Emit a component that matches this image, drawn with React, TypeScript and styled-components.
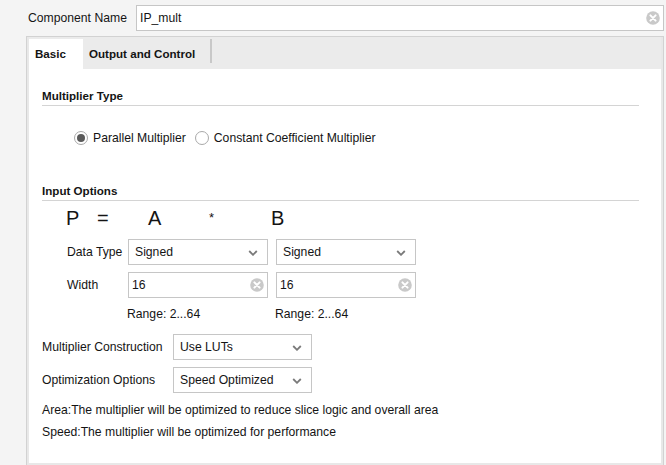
import React from "react";
import styled, { createGlobalStyle } from "styled-components";

const GlobalStyle = createGlobalStyle`
  html, body { margin: 0; padding: 0; background: #f4f4f4; }
  body { font-family: "Liberation Sans", Arial, sans-serif; font-size: 12.2px; color: #141414; }
  * { box-sizing: border-box; }
`;

const Page = styled.div`
  width: 666px;
  height: 465px;
  padding: 5px 2px 0 26px;
  display: flex;
  flex-direction: column;
  overflow: hidden;
`;

const NameRow = styled.div`
  display: flex;
  align-items: center;
  height: 26px;
`;

const NameLabel = styled.span`
  margin-left: 2px;
  width: 108px;
`;

const Field = styled.div<{ $w?: number }>`
  position: relative;
  display: flex;
  align-items: center;
  height: 26px;
  width: ${(p) => (p.$w ? `${p.$w}px` : "auto")};
  flex: ${(p) => (p.$w ? "none" : "1")};
  background: #fff;
  border: 1px solid #c6c6c6;
  padding: 0 0 0 3px;
`;

const FieldText = styled.span`
  flex: 1;
  white-space: nowrap;
`;

const ClearWrap = styled.span`
  display: flex;
  width: 14px;
  height: 14px;
  margin-right: 3px;
`;

const ClearIcon = () => (
  <ClearWrap>
    <svg width="14" height="14" viewBox="0 0 14 14">
      <circle cx="7" cy="7" r="6.8" fill="#c9c9c9" />
      <path d="M4.4 4.4 L9.6 9.6 M9.6 4.4 L4.4 9.6" stroke="#fff" strokeWidth="2" strokeLinecap="round" />
    </svg>
  </ClearWrap>
);

const Panel = styled.div`
  margin-top: 5px;
  width: 638px;
  flex: 1;
  border: 1px solid #d2d2d2;
  border-bottom: none;
  background: #e8e8e8;
  padding: 0 2px 2px;
  display: flex;
  flex-direction: column;
`;

const TabBar = styled.div`
  display: flex;
  height: 32px;
  padding-top: 2px;
  background: #ebebeb;
`;

const Tab = styled.div<{ $active?: boolean }>`
  display: flex;
  align-items: center;
  padding: 0 0 2px 6px;
  width: ${(p) => (p.$active ? "54px" : "127px")};
  background: ${(p) => (p.$active ? "#fff" : "transparent")};
  font-weight: bold;
  font-size: 11.6px;
`;

const TabSep = styled.div`
  width: 2px;
  height: 24px;
  background: #c8c8c8;
  align-self: flex-start;
`;

const Content = styled.div`
  flex: 1;
  background: #fff;
  padding: 20px 22px 0 13px;
  display: flex;
  flex-direction: column;
`;

const SectionTitle = styled.div<{ $mt?: number }>`
  font-weight: bold;
  font-size: 11.6px;
  line-height: 14px;
  padding-bottom: 2px;
  border-bottom: 1px solid #d4d4d4;
  margin-top: ${(p) => p.$mt ?? 0}px;
`;

const RadioRow = styled.div`
  display: flex;
  align-items: center;
  margin: 24px 0 0 32px;
  height: 16px;
`;

const Radio = styled.span<{ $checked?: boolean }>`
  width: 14px;
  height: 14px;
  border-radius: 50%;
  border: 1px solid #a9a9a9;
  background: #fff;
  display: flex;
  align-items: center;
  justify-content: center;
  margin-right: 5px;
  &::after {
    content: "";
    display: ${(p) => (p.$checked ? "block" : "none")};
    width: 8px;
    height: 8px;
    border-radius: 50%;
    background: #5a5a5a;
  }
`;

const RadioLabel = styled.span`
  margin-right: 9px;
`;

const Equation = styled.div`
  display: flex;
  align-items: baseline;
  margin: 5px 0 0 24px;
  height: 24px;
  font-size: 20px;
  line-height: 24px;
`;

const EqCell = styled.span<{ $w: number; $small?: boolean }>`
  width: ${(p) => p.$w}px;
  font-size: ${(p) => (p.$small ? "13px" : "20px")};
  position: relative;
  top: ${(p) => (p.$small ? "-3px" : "0")};
`;

const FormRow = styled.div<{ $indent: number; $label: number; $mt: number }>`
  display: flex;
  align-items: center;
  gap: 8px;
  margin-top: ${(p) => p.$mt}px;
  padding-left: ${(p) => p.$indent}px;
  & > label {
    width: ${(p) => p.$label - 8}px;
    flex: none;
    white-space: nowrap;
  }
`;

const RangeRow = styled.div`
  display: flex;
  gap: 8px;
  margin-top: 9px;
  padding-left: 85px;
  line-height: 14px;
  & > span { width: 140px; }
`;

const ChevronSvg = styled.svg`
  margin-right: 9px;
  margin-top: 2px;
`;

const Chevron = () => (
  <ChevronSvg width="10" height="6" viewBox="0 0 10 6">
    <path d="M1.2 1 L5 4.8 L8.8 1" fill="none" stroke="#7a7a7a" strokeWidth="1.8" />
  </ChevronSvg>
);

const SelectBox = styled(Field)`
  padding-left: 6px;
`;

const Note = styled.div<{ $mt: number }>`
  margin-top: ${(p) => p.$mt}px;
  line-height: 14px;
`;

const Select = ({ value, w }: { value: string; w: number }) => (
  <SelectBox $w={w}>
    <FieldText>{value}</FieldText>
    <Chevron />
  </SelectBox>
);

const TextInput = ({ value, w }: { value: string; w?: number }) => (
  <Field $w={w}>
    <FieldText>{value}</FieldText>
    <ClearIcon />
  </Field>
);

export default function App() {
  return (
    <>
      <GlobalStyle />
      <Page>
        <NameRow>
          <NameLabel>Component Name</NameLabel>
          <TextInput value="IP_mult" />
        </NameRow>
        <Panel>
          <TabBar>
            <Tab $active>Basic</Tab>
            <Tab>Output and Control</Tab>
            <TabSep />
          </TabBar>
          <Content>
            <SectionTitle>Multiplier Type</SectionTitle>
            <RadioRow>
              <Radio $checked />
              <RadioLabel>Parallel Multiplier</RadioLabel>
              <Radio />
              <RadioLabel>Constant Coefficient Multiplier</RadioLabel>
            </RadioRow>
            <SectionTitle $mt={38}>Input Options</SectionTitle>
            <Equation>
              <EqCell $w={31}>P</EqCell>
              <EqCell $w={51}>=</EqCell>
              <EqCell $w={61}>A</EqCell>
              <EqCell $w={62} $small>*</EqCell>
              <EqCell $w={20}>B</EqCell>
            </Equation>
            <FormRow $indent={25} $label={61} $mt={9}>
              <label>Data Type</label>
              <Select value="Signed" w={140} />
              <Select value="Signed" w={140} />
            </FormRow>
            <FormRow $indent={25} $label={61} $mt={7}>
              <label>Width</label>
              <TextInput value="16" w={140} />
              <TextInput value="16" w={140} />
            </FormRow>
            <RangeRow>
              <span>Range: 2...64</span>
              <span>Range: 2...64</span>
            </RangeRow>
            <FormRow $indent={-1} $label={131} $mt={13}>
              <label>Multiplier Construction</label>
              <Select value="Use LUTs" w={139} />
            </FormRow>
            <FormRow $indent={-1} $label={131} $mt={7}>
              <label>Optimization Options</label>
              <Select value="Speed Optimized" w={139} />
            </FormRow>
            <Note $mt={10}>Area:The multiplier will be optimized to reduce slice logic and overall area</Note>
            <Note $mt={8}>Speed:The multiplier will be optimized for performance</Note>
          </Content>
        </Panel>
      </Page>
    </>
  );
}
